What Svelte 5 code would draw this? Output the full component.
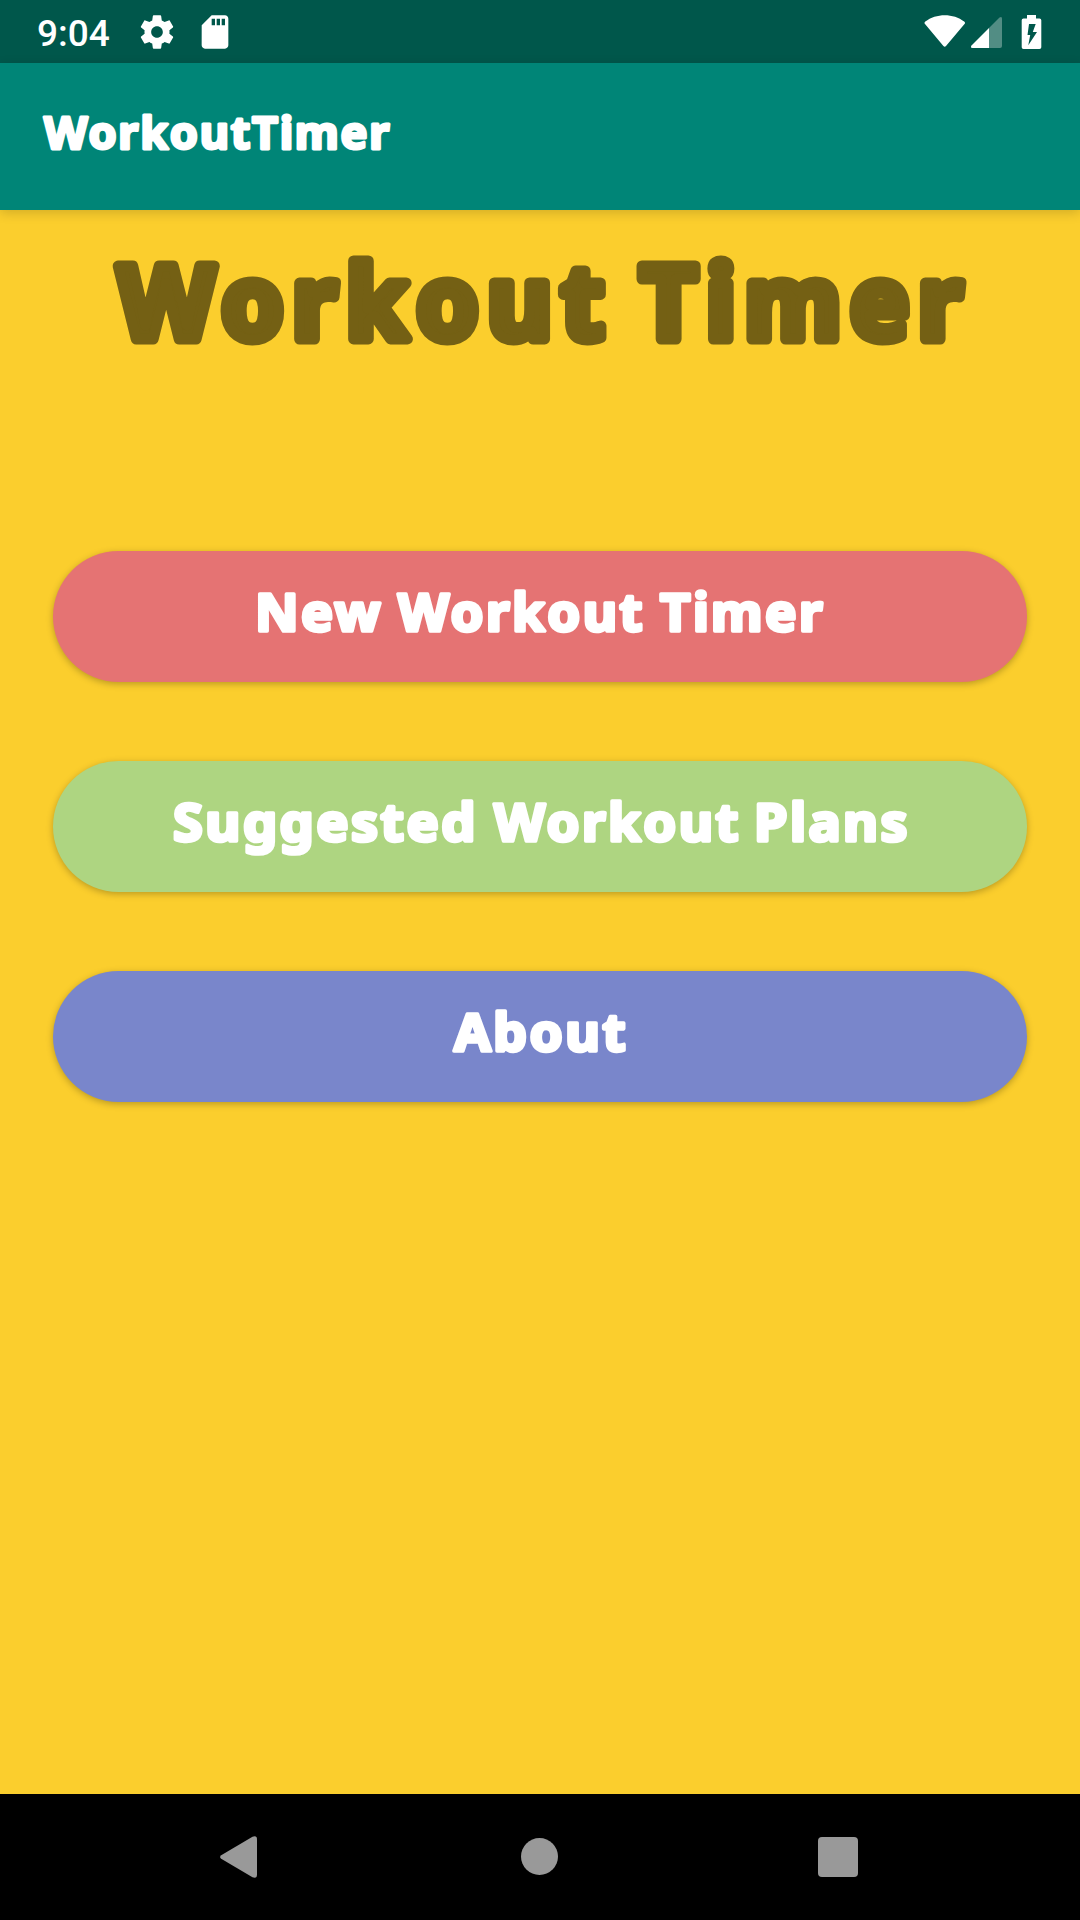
<script>
  const heading = [
    { text: 'Workout', x: 118, width: 495 },
    { text: 'Timer', x: 640, width: 331 }
  ];
  const actions = [
    {
      tone: 'coral',
      label: 'New Workout Timer',
      words: [
        { text: 'New', x: 202, width: 128 },
        { text: 'Workout', x: 345, width: 247 },
        { text: 'Timer', x: 607, width: 165 }
      ]
    },
    {
      tone: 'green',
      label: 'Suggested Workout Plans',
      words: [
        { text: 'Suggested', x: 120, width: 305 },
        { text: 'Workout', x: 441, width: 247 },
        { text: 'Plans', x: 701, width: 156 }
      ]
    },
    {
      tone: 'indigo',
      label: 'About',
      words: [{ text: 'About', x: 401, width: 174 }]
    }
  ];
</script>

<div class="screen">
  <header class="status">
    <span class="clock">9:04</span>
    <svg class="gear" viewBox="0 0 24 24" aria-hidden="true">
      <path d="M19.43 12.98c.04-.32.07-.64.07-.98s-.03-.66-.07-.98l2.11-1.65c.19-.15.24-.42.12-.64l-2-3.46c-.12-.22-.39-.3-.61-.22l-2.49 1c-.52-.4-1.08-.73-1.69-.98l-.38-2.65C14.46 2.18 14.25 2 14 2h-4c-.25 0-.46.18-.49.42l-.38 2.65c-.61.25-1.17.59-1.69.98l-2.49-1c-.23-.09-.49 0-.61.22l-2 3.46c-.13.22-.07.49.12.64l2.11 1.65c-.04.32-.07.65-.07.98s.03.66.07.98l-2.11 1.65c-.19.15-.24.42-.12.64l2 3.46c.12.22.39.3.61.22l2.49-1c.52.4 1.08.73 1.69.98l.38 2.65c.03.24.24.42.49.42h4c.25 0 .46-.18.49-.42l.38-2.65c.61-.25 1.17-.59 1.69-.98l2.49 1c.23.09.49 0 .61-.22l2-3.46c.12-.22.07-.49-.12-.64l-2.11-1.65zM12 15.5c-1.93 0-3.5-1.57-3.5-3.5s1.57-3.5 3.5-3.5 3.5 1.57 3.5 3.5-1.57 3.5-3.5 3.5z" />
    </svg>
    <svg class="card" viewBox="0 0 24 24" aria-hidden="true">
      <path d="M18 2h-8L4.02 8 4 20c0 1.1.9 2 2 2h12c1.1 0 2-.9 2-2V4c0-1.1-.9-2-2-2zm-6 6h-2V4h2v4zm3 0h-2V4h2v4zm3 0h-2V4h2v4z" />
    </svg>
    <svg class="signals" viewBox="924 14 118 34" aria-hidden="true">
      <path d="M925 23Q923.800 21.800 925.300 20.500C936 12 953.500 12 964.200 20.500Q965.700 21.800 964.500 23L946 45Q944.700 46.400 943.400 45Z" />
      <path d="M989 27V47H972.500Q970 47 971.500 44.500Z" />
      <path opacity=".32" d="M989 27L999.500 16.500Q1002 15 1002 17.500V45Q1002 47 1000 47H989Z" />
      <path fill-rule="evenodd" d="M1027 14H1036V17.500H1039.500Q1041.300 17.500 1041.300 19.300V46.200Q1041.300 48 1039.500 48H1023.500Q1021.700 48 1021.700 46.200V19.300Q1021.700 17.500 1023.500 17.500H1027ZM1029 23L1027.500 34H1030.200L1028.300 44.300L1037 31H1032.800L1035.700 23Z" />
    </svg>
  </header>

  <div class="appbar">
    <svg class="lettering" width="400" height="147" viewBox="0 0 400 147" role="img" aria-label="WorkoutTimer">
      <text class="name" x="44" y="86" textLength="347" lengthAdjust="spacingAndGlyphs">WorkoutTimer</text>
    </svg>
  </div>

  <main>
    <svg class="lettering heading" width="1080" height="200" viewBox="0 0 1080 200" role="img" aria-label="Workout Timer">
      {#each heading as word}
        <text x={word.x} y="129" textLength={word.width} lengthAdjust="spacingAndGlyphs">{word.text}</text>
      {/each}
    </svg>

    <nav class="actions">
      {#each actions as action}
        <button class={action.tone} aria-label={action.label}>
          <svg class="lettering" width="974" height="131" viewBox="0 0 974 131">
            {#each action.words as word}
              <text class="label" x={word.x} y="80" textLength={word.width} lengthAdjust="spacingAndGlyphs">{word.text}</text>
            {/each}
          </svg>
        </button>
      {/each}
    </nav>
  </main>

  <footer class="navbar">
    <svg width="37" height="42" viewBox="0 0 37 42" aria-hidden="true">
      <path d="M1.200 19.200L32.500 .7Q37 -1 37 3.500V38.500Q37 43 32.500 41.300L1.200 22.800Q-1 21 1.200 19.200Z" />
    </svg>
    <svg class="home" width="37" height="38" viewBox="0 0 37 38" aria-hidden="true">
      <circle cx="18.500" cy="18.500" r="18.500" />
    </svg>
    <svg width="40" height="40" viewBox="0 0 40 40" aria-hidden="true">
      <rect width="40" height="40" rx="4" />
    </svg>
  </footer>
</div>

<style>
  :global(body) {
    margin: 0;
  }

  .screen {
    width: 1080px;
    height: 1920px;
    display: flex;
    flex-direction: column;
    overflow: hidden;
    background: #fbce2d;
    font-family: Roboto, sans-serif;
  }

  svg {
    display: block;
    flex: none;
  }

  .status {
    height: 63px;
    box-sizing: border-box;
    padding: 0 38px 0 37px;
    display: flex;
    align-items: center;
    background: #00574b;
    color: #fff;
    fill: #fff;
  }

  .clock {
    width: 100px;
    font-size: 37px;
    font-weight: 500;
    line-height: 40px;
    padding-top: 4px;
  }

  .gear,
  .card {
    width: 40px;
    height: 40px;
  }

  .card {
    margin-left: 18px;
  }

  .signals {
    width: 118px;
    height: 34px;
    margin-left: auto;
  }

  .appbar {
    position: relative;
    height: 147px;
    flex: none;
    background: #008577;
    box-shadow: 0 3px 11px rgba(0, 0, 0, 0.16);
  }

  .lettering {
    font-family: 'Noto Sans', 'Open Sans', sans-serif;
    font-weight: 700;
    fill: #fff;
    stroke: #fff;
    stroke-linejoin: round;
  }

  .name {
    font-size: 44px;
    letter-spacing: 1.7px;
    stroke-width: 3px;
  }

  .label {
    font-size: 52px;
    letter-spacing: 2.4px;
    stroke-width: 3.6px;
  }

  .heading {
    fill: #746014;
    stroke: #746014;
    font-size: 102px;
    letter-spacing: 9px;
    stroke-width: 11px;
  }

  main {
    flex: 1;
  }

  .actions {
    display: flex;
    flex-direction: column;
    gap: 79px;
    padding: 141px 53px 0;
  }

  button {
    height: 131px;
    padding: 0;
    border: 0;
    border-radius: 66px;
    box-shadow: 0 2px 7px rgba(0, 0, 0, 0.26);
  }

  .coral {
    background: #e57373;
  }

  .green {
    background: #aed581;
  }

  .indigo {
    background: #7986cb;
  }

  .navbar {
    height: 126px;
    box-sizing: border-box;
    padding: 0 222px 0 220px;
    display: flex;
    align-items: center;
    justify-content: space-between;
    background: #000;
    fill: #999;
  }

  .home {
    margin-left: 3px;
  }
</style>
